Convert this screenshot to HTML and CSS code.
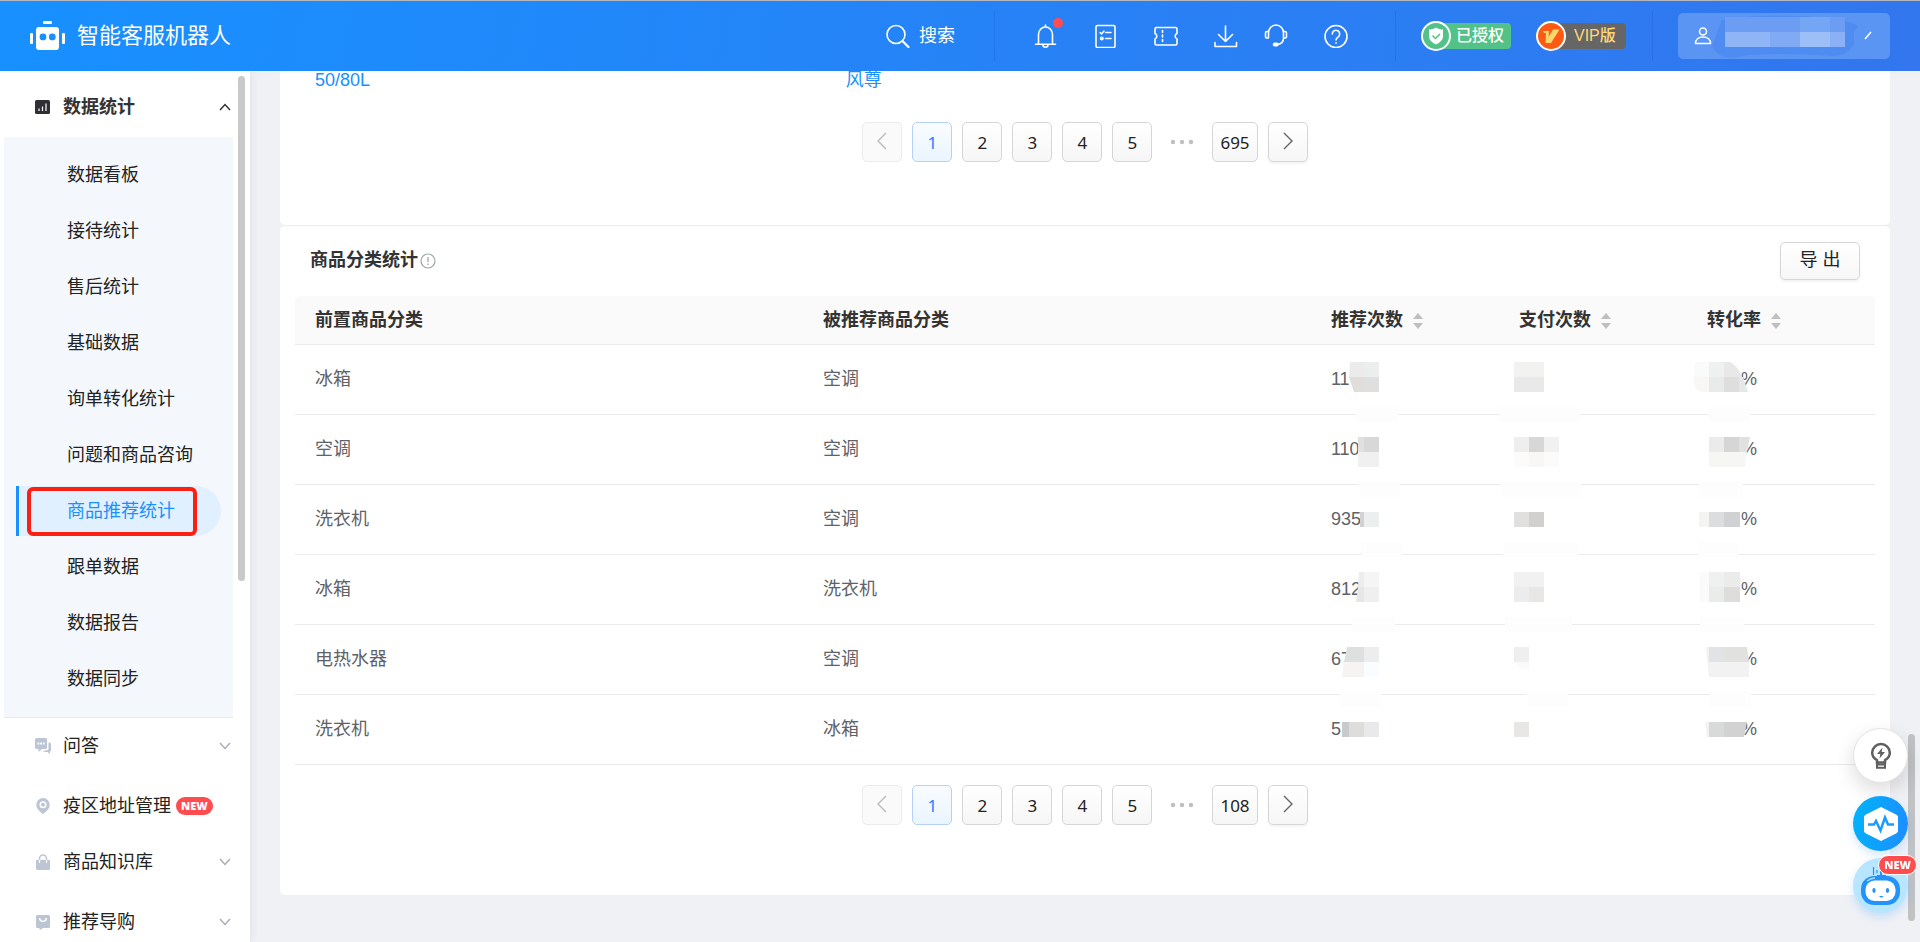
FILE: index.html
```html
<!DOCTYPE html>
<html lang="zh-CN">
<head>
<meta charset="utf-8">
<title>智能客服机器人</title>
<link rel="stylesheet" href="styles.css">
</head>
<body>
<header class="topbar">
  <div class="brand">
    <svg width="36" height="30" viewBox="0 0 36 30" fill="#fff"><rect x="13" y="0" width="9" height="3" rx="1"/><rect x="0" y="12" width="3" height="11" rx="1"/><rect x="32" y="12" width="3" height="11" rx="1"/><path fill-rule="evenodd" d="M9 6h17a3 3 0 0 1 3 3v17a3 3 0 0 1-3 3H9a3 3 0 0 1-3-3V9a3 3 0 0 1 3-3zM13 12.500a3.400 3.400 0 1 0 0 6.800a3.400 3.400 0 0 0 0-6.800zM22.300 12.500a3.400 3.400 0 1 0 0 6.800a3.400 3.400 0 0 0 0-6.800z"/></svg>
    <span class="brand-name">智能客服机器人</span>
  </div>
  <button class="search" type="button">
    <svg class="ico" viewBox="0 0 24 24"><circle cx="10" cy="10.500" r="9"/><path d="M16.500 17l6 6" stroke-width="2.200"/></svg>
    <span>搜索</span>
  </button>
  <i class="divider"></i>
  <nav class="tools">
    <button type="button" class="tool" aria-label="通知">
      <svg class="ico" viewBox="0 0 24 24"><path d="M4.500 20v-9.500a7 7.500 0 0 1 14 0V20M1.500 20.200h20M11.500 3V1M9 21a2.500 2.200 0 0 0 5 0"/></svg>
      <i class="dot"></i>
    </button>
    <button type="button" class="tool" aria-label="任务"><svg class="ico" viewBox="0 0 24 24"><rect x="2" y="1.500" width="19" height="22" rx="1.500"/><path d="M6 8.500l1.500 1.500L10 7M11.500 8.500H17M11.500 14.500H17" stroke-width="1.500"/><circle cx="7.800" cy="14.500" r="1.200"/></svg></button>
    <button type="button" class="tool" aria-label="卡券"><svg class="ico" viewBox="0 0 24 24"><path d="M1 5a1.500 1.500 0 0 1 1.500-1.500h19A1.500 1.500 0 0 1 23 5v4.500a3 3 0 0 0 0 5.500v4.500a1.500 1.500 0 0 1-1.500 1.500h-19A1.500 1.500 0 0 1 1 19.500V15a3 3 0 0 0 0-5.500z"/><path d="M8.500 6.500v12" stroke-dasharray="2 2.500"/></svg></button>
    <button type="button" class="tool" aria-label="下载"><svg class="ico" viewBox="0 0 24 24"><path d="M11.500 2v15M4.500 10.500l7 7 7-7M1 18.500V22.500h21.500v-4"/></svg></button>
    <button type="button" class="tool tool-service" aria-label="客服"><svg class="ico" viewBox="0 0 24 24"><path d="M4.500 14V9a7 7.500 0 0 1 15 0v5M4.500 7.500H3A1.500 1.500 0 0 0 1.500 9v3.500A1.500 1.500 0 0 0 3 14h1.500M19.500 7.500H21A1.500 1.500 0 0 1 22.500 9v3.500A1.500 1.500 0 0 1 21 14h-1.500c0 4-2 6-6 6.500"/><rect x="9.500" y="19.300" width="4.500" height="2.400" rx="1.200" fill="#fff"/></svg></button>
    <button type="button" class="tool" aria-label="帮助"><svg class="ico" viewBox="0 0 24 24"><circle cx="12" cy="12.500" r="11"/><path d="M8.300 10a3.700 3.700 0 1 1 5.700 3.100c-1.300.9-2 1.500-2 2.900M12 18.800v.4"/></svg></button>
  </nav>
  <i class="divider"></i>
  <span class="tag tag-auth">
    <svg width="30" height="30" viewBox="0 0 30 30"><circle cx="15" cy="15" r="14" fill="#52c288" stroke="#fff" stroke-width="2"/><path d="M15 6.500c2.500 1.500 4.500 2 7 2V15c0 4-3 6.500-7 8.500-4-2-7-4.500-7-8.500V8.500c2.500 0 4.500-.5 7-2z" fill="#fff"/><path d="M11.500 14.500l3 3 4.500-4.500" fill="none" stroke="#52c288" stroke-width="1.500"/></svg>
    <span>已授权</span>
  </span>
  <span class="tag tag-vip">
    <svg width="30" height="30" viewBox="0 0 30 30"><circle cx="15" cy="15" r="14" fill="#ff5a14" stroke="#fff" stroke-width="2"/><path d="M7 10h6l-.5 6L17 8.500h6.500L15 22h-5.500l.5-10H8z" fill="#ffd66b"/></svg>
    <span>VIP版</span>
  </span>
  <i class="divider"></i>
  <button class="user" type="button" aria-label="账户">
    <svg width="18" height="18" viewBox="0 0 18 18" fill="none" stroke="#fff" stroke-width="1.500"><circle cx="9" cy="4.500" r="3.500"/><path d="M1.500 16.500c0-4 3-6.500 7.500-6.500s7.500 2.500 7.500 6.500z" stroke-linejoin="round"/></svg>
    <svg class="user-mask" width="156" height="45" viewBox="0 0 156 45"><path d="M0 32C8 48 24 44 36 41c30-2 60-1 84 1 14 0 18-6 22-12V18l4-6C130 0 40-1 10 6z" fill="#4f8cf1"/><path d="M13 3h120v15H13z" fill="#6c9df3"/><path d="M88 3h30v15H88z" fill="#75a6f6"/><path d="M13 18h45v15H13z" fill="#8fb5f6"/><path d="M58 18h30v15H58z" fill="#80abf4"/><path d="M88 18h30v15H88z" fill="#9dbff8"/><path d="M118 18h15v15h-15z" fill="#8bb0f5"/><path d="M153 25l6-7" stroke="#fff" stroke-width="1.500"/></svg>
  </button>
</header>

<div class="layout">
  <aside class="sidebar">
    <nav class="menu">
      <button type="button" class="menu-item menu-open">
        <svg class="menu-ico" viewBox="0 0 16 16"><rect x="0" y="1" width="15" height="14" rx="1.500" fill="#2f3033"/><path d="M4 12V9.500M7.500 12V7.500M11 12V4.500" stroke="#fff" stroke-width="1.200"/></svg>
        <span>数据统计</span>
        <svg class="chev" viewBox="0 0 12 8"><path d="M1 7l5-5.500L11 7"/></svg>
      </button>
      <div class="submenu">
        <a class="sub" href="#">数据看板</a>
        <a class="sub" href="#">接待统计</a>
        <a class="sub" href="#">售后统计</a>
        <a class="sub" href="#">基础数据</a>
        <a class="sub" href="#">询单转化统计</a>
        <a class="sub" href="#">问题和商品咨询</a>
        <a class="sub active" href="#">商品推荐统计<i class="marker"></i></a>
        <a class="sub" href="#">跟单数据</a>
        <a class="sub" href="#">数据报告</a>
        <a class="sub" href="#">数据同步</a>
      </div>
      <button type="button" class="menu-item expandable">
        <svg class="menu-ico" viewBox="0 0 16 16" fill="#bcc5d4"><path d="M1.500 0h9A1.500 1.500 0 0 1 12 1.500v8A1.500 1.500 0 0 1 10.500 11H7l-3.500 3V11h-2A1.500 1.500 0 0 1 0 9.500v-8A1.500 1.500 0 0 1 1.500 0z"/><path d="M13.500 4.500h1A1.500 1.500 0 0 1 16 6v6.500a1 1 0 0 1-1 1V16l-2.500-2H8l2.500-1.800h1.500a1.500 1.500 0 0 0 1.500-1.500z"/><path d="M2.500 5.500h1.800M5.200 5.500H7M8 5.500h1.600" stroke="#fff" stroke-width="1.800"/></svg>
        <span>问答</span>
        <svg class="chev" viewBox="0 0 12 8"><path d="M1 1l5 5.500L11 1"/></svg>
      </button>
      <a class="menu-item" href="#">
        <svg class="menu-ico" viewBox="0 0 16 16" fill="#bcc5d4"><path d="M8 0a6.700 6.700 0 0 1 6.700 6.700c0 3.800-2.700 6.300-6.700 9.300-4-3-6.700-5.500-6.700-9.300A6.700 6.700 0 0 1 8 0z"/><circle cx="8" cy="6.700" r="2.800" fill="none" stroke="#fff" stroke-width="1.500"/></svg>
        <span>疫区地址管理</span>
        <b class="new">NEW</b>
      </a>
      <button type="button" class="menu-item expandable">
        <svg class="menu-ico" viewBox="0 0 16 16" fill="#bcc5d4"><path d="M2 6h12a1 1 0 0 1 1 1v7.500a1.500 1.500 0 0 1-1.500 1.500h-11A1.500 1.500 0 0 1 1 14.500V7a1 1 0 0 1 1-1z"/><path d="M4.500 9V4.500a3.500 3.500 0 0 1 7 0V9" fill="none" stroke="#bcc5d4" stroke-width="1.500"/><path d="M4.500 6v3M11.500 6v3" stroke="#fff" stroke-width="1.200"/></svg>
        <span>商品知识库</span>
        <svg class="chev" viewBox="0 0 12 8"><path d="M1 1l5 5.500L11 1"/></svg>
      </button>
      <button type="button" class="menu-item expandable">
        <svg class="menu-ico" viewBox="0 0 16 16" fill="#bcc5d4"><path d="M2.500 1h11A1.500 1.500 0 0 1 15 2.500v10a1.500 1.500 0 0 1-1.500 1.500H8l-3 2-.8-2H2.500A1.500 1.500 0 0 1 1 12.500v-10A1.500 1.500 0 0 1 2.500 1z"/><path d="M4.700 4a3.300 3.300 0 0 0 6.600 0" fill="none" stroke="#fff" stroke-width="1.500"/></svg>
        <span>推荐导购</span>
        <svg class="chev" viewBox="0 0 12 8"><path d="M1 1l5 5.500L11 1"/></svg>
      </button>
    </nav>
    <i class="side-scroll"></i>
  </aside>

  <main class="content">
    <section class="panel panel-first">
      <div class="link-row"><a href="#">50/80L</a><a href="#">风尊</a></div>
      <nav class="pager">
        <button type="button" class="page" disabled aria-label="上一页"><svg class="arrow" viewBox="0 0 12 18"><path d="M10 1L2 9l8 8"/></svg></button>
        <button type="button" class="page current">1</button>
        <button type="button" class="page">2</button>
        <button type="button" class="page">3</button>
        <button type="button" class="page">4</button>
        <button type="button" class="page">5</button>
        <svg class="dots" viewBox="0 0 40 40"><circle cx="11" cy="20" r="2.200"/><circle cx="20" cy="20" r="2.200"/><circle cx="29" cy="20" r="2.200"/></svg>
        <button type="button" class="page">695</button>
        <button type="button" class="page next" aria-label="下一页"><svg class="arrow" viewBox="0 0 12 18"><path d="M2 1l8 8-8 8"/></svg></button>
      </nav>
    </section>

    <section class="panel panel-second">
      <div class="panel-head">
        <h2>商品分类统计</h2>
        <svg class="info" viewBox="0 0 16 16"><circle cx="8" cy="8" r="7"/><path d="M8 4v5M8 10.500v1.500"/></svg>
        <button type="button" class="export">导 出</button>
      </div>
      <table class="grid">
        <colgroup><col class="c-wide"><col class="c-wide"><col class="c-num"><col class="c-num"><col></colgroup>
        <thead>
          <tr>
            <th>前置商品分类</th>
            <th>被推荐商品分类</th>
            <th>推荐次数<svg class="sort" viewBox="0 0 10 16"><path d="M5 0l5 6H0zM5 16l5-6H0z"/></svg></th>
            <th>支付次数<svg class="sort" viewBox="0 0 10 16"><path d="M5 0l5 6H0zM5 16l5-6H0z"/></svg></th>
            <th>转化率<svg class="sort" viewBox="0 0 10 16"><path d="M5 0l5 6H0zM5 16l5-6H0z"/></svg></th>
          </tr>
        </thead>
        <tbody>
          <tr>
            <td>冰箱</td><td>空调</td>
            <td>11<svg class="mask"><path fill="#ebebeb" d="M39 17h14v15H38z"/><path fill="#eceeee" d="M53 17h15v15H53z"/><path fill="#e0dddb" d="M38 32h15v15H43z"/><path fill="#dfdfdf" d="M53 32h15v15H53z"/><path fill="#fdfdfd" d="M45 62h42v15H45z"/></svg></td>
            <td><svg class="mask"><path fill="#f2f2f1" d="M15 17h30v15H15z"/><path fill="#e9e9e9" d="M15 32h30v15H15z"/><path fill="#fdfdfd" d="M0 62h81v15H0z"/></svg></td>
            <td class="rate">%<svg class="mask"><path fill="#fafafa" d="M10 17h12v15H7V20z"/><path fill="#eff1f0" d="M22 17h15v15H22z"/><path fill="#e8e8e8" d="M37 17h6q8 4 12 15H37z"/><path fill="#f8f7f6" d="M7 32h15v15h-9q-6-4-6-9z"/><path fill="#e8ebea" d="M22 32h15v15H22z"/><path fill="#dedede" d="M37 32h15v15H37z"/><path fill="#e5e8e7" d="M52 32h4l5 15h-9z"/><path fill="#fdfdfd" d="M22 62h41v15H22z"/></svg></td>
          </tr>
          <tr>
            <td>空调</td><td>空调</td>
            <td>110<svg class="mask"><path fill="#e0e0e0" d="M47 22h6v15h-6z"/><path fill="#d8d8d8" d="M53 22h15v15H53z"/><path fill="#f0f0f0" d="M47 37h21v15H47z"/><path fill="#fdfdfd" d="M48 67h41v15H48z"/></svg></td>
            <td><svg class="mask"><path fill="#eee" d="M15 22h15v15H15z"/><path fill="#d8d7d8" d="M30 22h15v15H30z"/><path fill="#f1f1f1" d="M45 22h15v15H45z"/><path fill="#fafbfa" d="M15 37h45v15H15z"/><path fill="#f8f7f6" d="M30 37h15v15H30z"/><path fill="#fdfdfd" d="M2 67h80v15H2z"/></svg></td>
            <td class="rate">%<svg class="mask"><path fill="#ebebeb" d="M22 22h15v15H22z"/><path fill="#d6d6d6" d="M37 22h15v15H37z"/><path fill="#e1e1e0" d="M52 22h11l-3 15h-8z"/><path fill="#f6f6f5" d="M22 37h38l-2 15H22z"/><path fill="#fdfdfd" d="M12 67h44v15H12z"/></svg></td>
          </tr>
          <tr>
            <td>洗衣机</td><td>空调</td>
            <td>935<svg class="mask"><path fill="#d2d2d4" d="M49 27h4v15h-4z"/><path fill="#edefef" d="M53 27h15v15H53z"/><path fill="#fdfdfd" d="M50 57h41v15H50z"/></svg></td>
            <td><svg class="mask"><path fill="#e0e0e0" d="M15 27h15v15H15z"/><path fill="#d1d0cf" d="M30 27h15v15H30z"/><path fill="#fdfdfd" d="M4 57h75v15H4z"/></svg></td>
            <td class="rate">%<svg class="mask"><path fill="#f4f4f3" d="M12 27h10v15H12z"/><path fill="#dcdedd" d="M22 27h15v15H22z"/><path fill="#d0d1d2" d="M37 27h16v15H37z"/><path fill="#fdfdfd" d="M11 57h41v15H11z"/></svg></td>
          </tr>
          <tr>
            <td>冰箱</td><td>洗衣机</td>
            <td>812<svg class="mask"><path fill="#ececec" d="M48 17h5v15h-6z"/><path fill="#f5f5f5" d="M53 17h15v15H53z"/><path fill="#e6e6e6" d="M47 32h6v15h-8z"/><path fill="#efefef" d="M53 32h15v15H53z"/><path fill="#fdfdfd" d="M41 62h43v15H41z"/></svg></td>
            <td><svg class="mask"><path fill="#f1f1f1" d="M15 17h30v15H15z"/><path fill="#ececec" d="M15 32h15v15H15z"/><path fill="#e8e7e6" d="M30 32h15v15H30z"/><path fill="#fdfdfd" d="M6 62h67v15H6z"/></svg></td>
            <td class="rate">%<svg class="mask"><path fill="#fafbfa" d="M12 17h10v30H12z"/><path fill="#eff0f0" d="M22 17h15v15H22z"/><path fill="#ebebe9" d="M37 17h16v15H37z"/><path fill="#eaecea" d="M22 32h15v15H22z"/><path fill="#dedddc" d="M37 32h16v15H37z"/><path fill="#fdfdfd" d="M13 62h44v15H13z"/></svg></td>
          </tr>
          <tr>
            <td>电热水器</td><td>空调</td>
            <td>67<svg class="mask"><path fill="#dedfdf" d="M36 22h17v15H33z"/><path fill="#ededed" d="M53 22h15v15H53z"/><path fill="#f5f4f3" d="M33 37h20v15H31z"/><path fill="#f9fdff" d="M53 37h15v15H53z"/><path fill="#fdfdfd" d="M29 67h41v15H29z"/></svg></td>
            <td><svg class="mask"><path fill="#efefef" d="M15 22h15v15H15z"/><path fill="#fafafa" d="M15 37h15v7h-8z"/><path fill="#fdfdfd" d="M28 67h41v15H28z"/></svg></td>
            <td class="rate">%<svg class="mask"><path fill="#f2f2f2" d="M19 22h3v30z"/><path fill="#e2e3e6" d="M22 22h15v15H22z"/><path fill="#e1e1e0" d="M37 22h23l2 15H37z"/><path fill="#f2f2f2" d="M22 37h40v15H22z"/><path fill="#fdfdfd" d="M23 67h41v15H23z"/></svg></td>
          </tr>
          <tr>
            <td>洗衣机</td><td>冰箱</td>
            <td>5<svg class="mask"><path fill="#c9cacc" d="M31 27h7v15h-7z"/><path fill="#dedddc" d="M38 27h15v15H38z"/><path fill="#e7eae9" d="M53 27h15v15H53z"/></svg></td>
            <td><svg class="mask"><path fill="#e8e7e5" d="M15 27h15v15H15z"/></svg></td>
            <td class="rate">%<svg class="mask"><path fill="#f2f2f2" d="M18 27h4v15h-2z"/><path fill="#d7dad9" d="M22 27h15v15H22z"/><path fill="#d2d2d2" d="M37 27h23l-3 15H37z"/></svg></td>
          </tr>
        </tbody>
      </table>
      <nav class="pager">
        <button type="button" class="page" disabled aria-label="上一页"><svg class="arrow" viewBox="0 0 12 18"><path d="M10 1L2 9l8 8"/></svg></button>
        <button type="button" class="page current">1</button>
        <button type="button" class="page">2</button>
        <button type="button" class="page">3</button>
        <button type="button" class="page">4</button>
        <button type="button" class="page">5</button>
        <svg class="dots" viewBox="0 0 40 40"><circle cx="11" cy="20" r="2.200"/><circle cx="20" cy="20" r="2.200"/><circle cx="29" cy="20" r="2.200"/></svg>
        <button type="button" class="page">108</button>
        <button type="button" class="page next" aria-label="下一页"><svg class="arrow" viewBox="0 0 12 18"><path d="M2 1l8 8-8 8"/></svg></button>
      </nav>
    </section>
  </main>
</div>

<i class="page-scroll"></i>
<div class="floats">
  <button type="button" class="float tip" aria-label="建议"><svg width="22" height="28" viewBox="0 0 22 28" fill="none" stroke="#5f5f5f" stroke-width="2.500"><path d="M7 20.500v-2.300C4 16.500 2.200 14 2.200 10.800a8.800 8.800 0 0 1 17.600 0c0 3.200-1.800 5.700-4.800 7.400v2.300z"/><path d="M7 20v5.800h8V20M7 22.500h8" stroke-width="2"/><path d="M12.500 5.500L7 12h3.300l-.8 4.500L15 10h-3.300z" fill="#5f5f5f" stroke="none"/></svg></button>
  <button type="button" class="float pulse" aria-label="诊断"><svg width="36" height="36" viewBox="0 0 36 36"><path d="M18 1.500L33 9a2 2 0 0 1 1.500 2v14a2 2 0 0 1-1.500 2L18 34.500 3 27a2 2 0 0 1-1.500-2V11A2 2 0 0 1 3 9z" fill="#fff" stroke="#fff" stroke-linejoin="round"/><path d="M5 18.500h6l2-3.500 4.500 9.500L22 11.500l3 7h6" fill="none" stroke="#1a9cff" stroke-width="2.500"/></svg></button>
  <button type="button" class="float bot" aria-label="智能助手"><svg width="55" height="55" viewBox="0 0 55 55"><path d="M20.500 9v8M24 12v3" stroke="#2492fb" stroke-width="1.200"/><path d="M27 12h2v5h4v3h-9v-3h3z" fill="#2492fb"/><rect x="8" y="18" width="39" height="29" rx="13" fill="#2492fb"/><rect x="12.500" y="22.500" width="30" height="20.500" rx="9" fill="#fff"/><path d="M14 23q4-3 8-3" stroke="#a9dcff" stroke-width="1.500" fill="none"/><ellipse cx="21" cy="32.500" rx="1.600" ry="2.400" fill="#2492fb"/><ellipse cx="34.500" cy="32.500" rx="1.600" ry="2.400" fill="#2492fb"/><path d="M26 38q2.500 3 4.500 0z" fill="#2492fb"/></svg><b class="new float-new">NEW</b></button>
</div>
</body>
</html>
```
FILE: styles.css
```css
* { box-sizing: border-box; }
body {
  margin: 0;
  height: 100vh;
  display: flex;
  flex-direction: column;
  overflow: hidden;
  background: #f0f1f5;
  font-family: "Liberation Sans", "Noto Sans CJK SC", sans-serif;
  font-size: 18px;
  line-height: 24px;
  color: #222;
}
button { font: inherit; color: inherit; border: 0; background: none; padding: 0; margin: 0; cursor: pointer; }
a { text-decoration: none; color: inherit; }
svg { display: block; flex: none; }

.topbar {
  flex: none;
  height: 71px;
  padding: 0 30px;
  display: flex;
  align-items: center;
  color: #fff;
  border-top: 1px solid #b4b8be;
  background: linear-gradient(100deg, #1890ff, #3376ee);
  position: relative;
  z-index: 2;
}
.brand { display: flex; align-items: center; gap: 11px; margin-right: auto; }
.brand-name { font-size: 22px; line-height: 32px; }
.search { display: flex; align-items: center; gap: 9px; margin-right: 39px; }
.ico { width: 24px; height: 24px; fill: none; stroke: #fff; stroke-width: 1.6; stroke-linecap: round; stroke-linejoin: round; }
.divider { width: 1px; height: 50px; background: rgba(0, 40, 140, .14); }
.tools { display: flex; gap: 36px; margin: 0 47px 0 39px; }
.tool { position: relative; }
.tool-service { margin-left: -10px; }
.dot { position: absolute; top: -6px; right: -5px; width: 10px; height: 10px; border-radius: 50%; background: #ff4d4f; }
.tag {
  width: 90px;
  height: 26px;
  margin-left: 25px;
  border-radius: 4px;
  display: flex;
  align-items: center;
  gap: 5px;
  font-size: 16px;
  font-weight: 500;
}
.tag-auth { background: linear-gradient(90deg, transparent 15px, #52c288 15px); }
.tag-vip { background: linear-gradient(90deg, transparent 15px, #666 15px); color: #ffd877; gap: 8px; margin-right: 26px; }
.user {
  width: 212px;
  height: 46px;
  margin-left: 25px;
  padding-left: 16px;
  border-radius: 5px;
  background: #5a95f4;
  display: flex;
  align-items: center;
}
.user-mask { overflow: visible; }

.layout { flex: 1; min-height: 0; display: flex; }
.sidebar {
  flex: none;
  width: 250px;
  background: #fff;
  position: relative;
  z-index: 1;
  padding: 8px 17px 0 4px;
  box-shadow: 2px 0 8px rgba(0, 20, 60, .06);
}
.menu { display: flex; flex-direction: column; }
.menu-item {
  height: 56px;
  flex: none;
  padding: 0 2px 0 31px;
  display: flex;
  align-items: center;
  text-align: left;
}
.menu-open { font-weight: bold; margin-bottom: 2px; color: #333; }
.expandable { margin-bottom: 4px; }
.menu-ico { width: 16px; height: 16px; margin-right: 12px; }
.chev { width: 12px; height: 8px; margin-left: auto; fill: none; stroke: #a9adb5; stroke-width: 1.5; }
.menu-open .chev { stroke: #333; }
.new {
  height: 18px;
  padding: 0 5px;
  margin-left: 5px;
  border-radius: 9px;
  background: #ff4d4f;
  color: #fff;
  font: 800 11px/18px "Open Sans", sans-serif;
}
.submenu { padding: 13px 12px 7px; background: #f4f8fc; border-bottom: 1px solid #dfecfb; }
.sub {
  height: 50px;
  margin-bottom: 6px;
  padding-left: 48px;
  border-left: 3px solid transparent;
  display: flex;
  align-items: center;
  position: relative;
}
.sub.active { color: #1890ff; background: #e1f0ff; border-left-color: #1890ff; border-radius: 0 25px 25px 0; }
.marker { position: absolute; left: 8px; top: 1px; width: 170px; height: 49px; border: 4px solid #fb2014; border-radius: 6px; }
.side-scroll { position: absolute; right: 5px; top: 5px; width: 7px; height: 505px; border-radius: 4px; background: #c9c9c9; }

.content { flex: 1; min-width: 0; padding: 0 30px; }
.panel { background: #fff; border-radius: 5px; }
.panel-first { padding-bottom: 63px; border-radius: 0 0 5px 5px; }
.link-row { display: grid; grid-template-columns: 33% 1fr; padding-left: 35px; column-gap: 11px; line-height: 18px; color: #1890ff; }
.pager { display: flex; justify-content: center; gap: 10px; }
.panel-first .pager { margin-top: 33px; }
.page {
  min-width: 40px;
  height: 40px;
  padding: 2px 7px 0;
  border: 1px solid #d6d6d6;
  border-radius: 5px;
  background: linear-gradient(#fff, #f6f6f6);
  font-family: "Noto Sans", sans-serif;
  font-size: 17px;
}
.page:disabled { background: #fafafa; border-color: #ebebeb; }
.page.current { color: #2a7fff; border-color: #b5d0fa; background: linear-gradient(#f9fcff, #eaf5ff); }
.page.next { box-shadow: 0 2px 3px rgba(0, 0, 0, .05); }
.arrow { width: 12px; height: 18px; margin: -4px auto 0; fill: none; stroke: #666; stroke-width: 1.4; }
.page:disabled .arrow { stroke: #bbb; }
.dots { width: 40px; height: 40px; fill: #bfbfbf; }

.panel-second { padding: 16px 15px 70px; border-top: 1px solid #ebecee; }
.panel-head { display: flex; align-items: center; padding: 0 15px; margin-bottom: 16px; }
.panel-head h2 { margin: 0; font-size: 18px; line-height: 24px; padding-bottom: 2px; color: #333; }
.info { width: 16px; height: 16px; margin-left: 2px; fill: none; stroke: #9aa5a5; stroke-width: 1.2; }
.export {
  width: 80px;
  height: 38px;
  padding-bottom: 3px;
  margin-left: auto;
  border: 1px solid #d6d6d6;
  border-radius: 5px;
  background: linear-gradient(#fff, #f7f7f7);
  box-shadow: 0 2px 3px rgba(0, 0, 0, .05);
}
.grid { width: 100%; table-layout: fixed; border-collapse: separate; border-spacing: 0; margin-bottom: 20px; }
.c-wide { width: 32.15%; }
.c-num { width: 11.9%; }
.grid th, .grid td { text-align: left; padding: 0 20px; border-bottom: 1px solid #ebebeb; position: relative; }
.grid th { height: 49px; background: #fafafa; white-space: nowrap; color: #333; }
.grid th:first-child { border-top-left-radius: 5px; }
.grid th:last-child { border-top-right-radius: 5px; }
.grid td { height: 70px; padding-bottom: 2px; color: #606266; }
.grid .rate { padding-left: 54px; }
.sort { display: inline-block; width: 10px; height: 16px; margin-left: 10px; vertical-align: -3px; fill: #bfbfbf; }
.mask { position: absolute; inset: 0; width: 100%; height: 100%; overflow: visible; }

.page-scroll { position: fixed; right: 5px; bottom: 21px; width: 7px; height: 187px; border-radius: 4px; background: #c1c2c4; z-index: 3; }
.floats { position: fixed; right: 12px; bottom: 29px; display: flex; flex-direction: column; gap: 7px; z-index: 4; }
.float { width: 55px; height: 55px; border-radius: 50%; display: flex; align-items: center; justify-content: center; position: relative; }
.tip { margin-bottom: 6px; background: #fff; border: 1px solid #e2e2e2; box-shadow: 0 8px 20px rgba(0, 0, 0, .14); }
.pulse { background: linear-gradient(100deg, #00b4fa, #1e8cff); box-shadow: 0 4px 10px rgba(30, 140, 255, .2); }
.bot { background: #b8e5ff; box-shadow: 0 4px 10px rgba(30, 140, 255, .2); }
.float-new { position: absolute; top: -3px; right: -9px; height: 20px; margin: 0; border: 1px solid #fff; border-radius: 10px; }
```
